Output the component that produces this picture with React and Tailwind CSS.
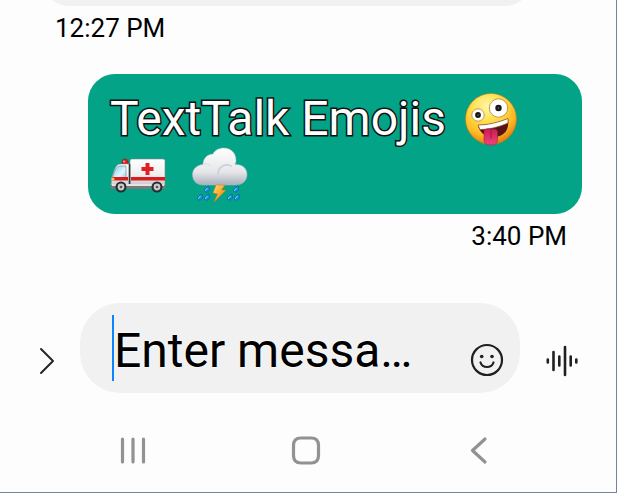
function ZanyFace() {
  return (
    <svg viewBox="0 0 54 56" className="h-14 w-[54px]" role="img" aria-label="Zany face">
      <defs>
        <radialGradient id="face" cx="42%" cy="25%" r="75%">
          <stop offset="0" stopColor="#fff6a8" />
          <stop offset="0.4" stopColor="#ffdf4a" />
          <stop offset="0.75" stopColor="#fdba25" />
          <stop offset="1" stopColor="#e77c10" />
        </radialGradient>
        <linearGradient id="tongue" x1="0" y1="0" x2="0" y2="1">
          <stop offset="0" stopColor="#c91c56" />
          <stop offset="1" stopColor="#ef4379" />
        </linearGradient>
      </defs>
      <circle cx="27" cy="28" r="25.5" fill="url(#face)" stroke="#c87812" strokeWidth="0.6" />
      <circle cx="14" cy="24" r="6.2" fill="#fff" stroke="#b9822c" strokeWidth="0.8" />
      <circle cx="34.5" cy="17" r="9.2" fill="#fff" stroke="#b9822c" strokeWidth="0.8" />
      <circle cx="14" cy="24" r="2.9" fill="#171717" />
      <circle cx="34.5" cy="17" r="3.2" fill="#171717" />
      <circle cx="14" cy="24" r="0.7" fill="#777" />
      <circle cx="34.5" cy="17" r="0.8" fill="#777" />
      <path d="M14 34 C25 34 35 31 44 27.5 C46 41 38 46 29 46 C21 46 15 41 14 34Z" fill="#571313" />
      <path d="M14 34 C25 34 35 31 44 27.5 L44 32 C35 36 25 38.5 16 38.5Z" fill="#fff" stroke="#8b5224" strokeWidth="0.7" />
      <path d="M20 41 C20 37.5 25 37 27 39 C29 37 33.5 38 33.5 41 V49 C33.5 52 32 54 27 54 C22 54 20 52 20 49Z" fill="url(#tongue)" stroke="#a71c48" strokeWidth="0.6" />
      <path d="M27 40 V47" stroke="#aa1548" strokeWidth="1.2" strokeLinecap="round" />
    </svg>
  );
}

function Ambulance() {
  return (
    <svg viewBox="0 0 56 56" className="mr-2 size-14" role="img" aria-label="Ambulance">
      <defs>
        <linearGradient id="van" x1="0" y1="0" x2="0" y2="1">
          <stop offset="0" stopColor="#fff" />
          <stop offset="0.55" stopColor="#f0eff0" />
          <stop offset="1" stopColor="#bfc0c2" />
        </linearGradient>
        <linearGradient id="glass" x1="0" y1="0" x2="1" y2="1">
          <stop offset="0" stopColor="#75cdf0" />
          <stop offset="0.6" stopColor="#e2f7fc" />
          <stop offset="1" stopColor="#8bc7db" />
        </linearGradient>
      </defs>
      <path d="M12 18 V15 C12 11 18 11 18 15 V18Z" fill="#d62420" stroke="#761b19" strokeWidth="0.6" />
      <circle cx="14" cy="14.5" r="1.1" fill="#ff9888" />
      <path d="M3 27 C5 20 7 17 11 17 H20 V41 H3 C1.5 41 1 40 1 38 L2 30Z" fill="url(#van)" stroke="#8d8f91" strokeWidth="0.5" />
      <path d="M3 30 C4 23 7 19 10 19 H16 V31 C11 33 6 33 3 30Z" fill="url(#glass)" stroke="#5c8290" strokeWidth="0.6" />
      <path d="M20 14 C20 12.5 21 12 22.5 12 H53 C54.5 12 55 13 55 14 V41 H20Z" fill="url(#van)" stroke="#858789" strokeWidth="0.6" />
      <path d="M19.5 17 V41" stroke="#343434" strokeWidth="1.6" />
      <path d="M2 30 H18 V33.5 H2Z M21 30 H55 V33.5 H21Z" fill="#db1c1f" />
      <path d="M35.500 16 H39.500 V20 H43.500 V24 H39.500 V28 H35.500 V24 H31.500 V20 H35.500Z" fill="#e02023" />
      <path d="M1 38 H55 V42 H1Z" fill="#77797b" />
      <path d="M2 37 H54 V39 H2Z" fill="#e5e5e5" />
      <circle cx="3" cy="32" r="1.6" fill="#ffc253" />
      <circle cx="11" cy="40" r="5.5" fill="#292b2c" />
      <circle cx="11" cy="40" r="3.4" fill="#c9cccf" />
      <circle cx="11" cy="40" r="1.3" fill="#555" />
      <circle cx="47" cy="40" r="5.5" fill="#292b2c" />
      <circle cx="47" cy="40" r="3.4" fill="#c9cccf" />
      <circle cx="47" cy="40" r="1.3" fill="#555" />
    </svg>
  );
}

function StormCloud() {
  const drops = [[13, 39], [6, 47], [13, 47], [42, 39], [36, 47], [43, 47]];

  return (
    <svg viewBox="0 0 56 56" className="size-14" role="img" aria-label="Cloud with lightning and rain">
      <defs>
        <linearGradient id="cloud" x1="0" y1="0" x2="0" y2="1">
          <stop offset="0" stopColor="#fff" />
          <stop offset="0.65" stopColor="#e5e6ea" />
          <stop offset="1" stopColor="#a9b0ba" />
        </linearGradient>
        <linearGradient id="bolt" x1="0" y1="0" x2="1" y2="1">
          <stop offset="0" stopColor="#ffe179" />
          <stop offset="0.5" stopColor="#ffa62e" />
          <stop offset="1" stopColor="#e46b12" />
        </linearGradient>
      </defs>
      <path d="M11 38 C4 38 0.5 33 0.5 27.5 C0.5 22 5 18 11 17.5 C11 11 16 7 21 7 C23 3 27 1 32 1 C39 1 44 6 44 13 C44 14.5 44 15.5 43 17.5 C50 17 55 21 55 27.5 C55 34 50 38 44 38Z" fill="url(#cloud)" stroke="#b3bbc2" strokeWidth="0.5" />
      <path d="M26 27 C26 20 33 16 39 19" fill="none" stroke="#cdd0d5" strokeWidth="1.8" strokeLinecap="round" />
      <path d="M11 17.5 C14 16 17 17 19 19" fill="none" stroke="#e2e3e6" strokeWidth="1.5" />
      <path d="M24 38 L33 38 L29.5 43 L34 43 L22 55 L25.5 47 L21 46Z" fill="url(#bolt)" stroke="#c8771b" strokeWidth="0.5" />
      {drops.map(([x, y], i) => (
        <g key={i} transform={`translate(${x} ${y})`}>
          <path d="M4 0 C5 3 4.5 6 1.5 6 C-2 6 -1 2 4 0Z" fill="#168fdf" stroke="#075b9b" strokeWidth="0.6" />
          <path d="M2.5 2.5 C0.5 3.5 0 4.5 1 5" fill="none" stroke="#9ce4ff" strokeWidth="1" />
        </g>
      ))}
    </svg>
  );
}

function Composer() {
  return (
    <form className="mt-[49px] flex items-end" onSubmit={(e) => e.preventDefault()}>
      <button type="button" aria-label="More options" className="mb-4 ml-8 mr-4 flex h-8 w-8 shrink-0 items-center justify-center">
        <svg viewBox="0 0 32 32" className="size-8" fill="none" stroke="#252525" strokeWidth="2" strokeLinecap="round" strokeLinejoin="round">
          <path d="M9 4 L21 16 L9 28" />
        </svg>
      </button>
      <div className="flex min-w-0 flex-1 items-end rounded-[40px] bg-[#f1f1f1] pb-3 pl-8 pr-4 pt-3">
        <span className="h-[66px] w-[2px] shrink-0 bg-[#0a84ff]" />
        <input
          type="text"
          aria-label="Enter message"
          placeholder="Enter messa…"
          className="h-[66px] min-w-0 flex-1 bg-transparent pt-1 text-5xl leading-[60px] caret-transparent outline-none [text-shadow:0_0_2px_white,0_0_2px_white] placeholder:text-black placeholder:opacity-100"
        />
        <button type="button" aria-label="Insert emoji" className="mb-1 size-[34px] shrink-0">
          <svg viewBox="0 0 34 34" className="size-[34px]" fill="none" stroke="#202020" strokeWidth="2.2" strokeLinecap="round">
            <circle cx="17" cy="17" r="15" />
            <circle cx="11.7" cy="13.5" r="1.8" fill="#202020" stroke="none" />
            <circle cx="22" cy="13.5" r="1.8" fill="#202020" stroke="none" />
            <path d="M10.5 19.5 C12.5 25.5 21.5 25.5 23.5 19.5" />
          </svg>
        </button>
      </div>
      <button type="button" aria-label="Record voice message" className="mb-4 ml-[26px] mr-[38px] size-8 shrink-0">
        <svg viewBox="0 0 32 32" className="size-8" fill="none" stroke="#202020" strokeWidth="2.6" strokeLinecap="round">
          <path d="M1.8 14.5 V17.5 M7.5 7 V25 M13.3 11.5 V20.5 M19 2 V30 M24.7 11.5 V20.5 M30.3 14.5 V17.5" />
        </svg>
      </button>
    </form>
  );
}

function NavBar() {
  const icons = [
    { label: 'Recent apps', path: 'M5.5 5 V28 M16 5 V28 M26.5 5 V28' },
    { label: 'Home', path: 'M11 4 H21 Q28.5 4 28.5 11.5 V21.5 Q28.5 29 21 29 H11 Q3.5 29 3.5 21.5 V11.5 Q3.5 4 11 4Z' },
    { label: 'Back', path: 'M22 5 L9.5 16.5 L22 28' },
  ];

  return (
    <nav className="mt-[41px] grid grid-cols-3 pb-6 pl-[46px] pr-[51px]">
      {icons.map((icon) => (
        <button key={icon.label} type="button" aria-label={icon.label} className="flex justify-center">
          <svg viewBox="0 0 32 32" className="size-8" fill="none" stroke="#929292" strokeWidth="3.2" strokeLinecap="round" strokeLinejoin="round">
            <path d={icon.path} />
          </svg>
        </button>
      ))}
    </nav>
  );
}

export default function App() {
  return (
    <div className="min-h-screen border-b border-r border-[#7484a0] bg-[#fdfdfd] font-[Roboto,sans-serif] text-black">
      <main>
        <div className="ml-[42px] mr-[84px] h-[6px] overflow-hidden">
          <div className="-mt-14 h-[62px] rounded-[27px] bg-[#f1f1f1]" />
        </div>
        <time className="ml-[55px] mt-1 block text-[26px] leading-9">12:27 PM</time>

        <div className="ml-[88px] mr-[34px] mt-7 flex flex-wrap items-center gap-x-[18px] rounded-[27px] bg-[#02a387] px-[22px] pb-[11px] pt-[17px]">
          <p className="text-5xl leading-[56px] text-white [-webkit-text-stroke:3px_#111] [paint-order:stroke_fill]">
            TextTalk Emojis
          </p>
          <ZanyFace />
          <Ambulance />
          <StormCloud />
        </div>
        <time className="mr-[49px] mt-1 block text-right text-[26px] leading-9">3:40 PM</time>
      </main>
      <Composer />
      <NavBar />
    </div>
  );
}
